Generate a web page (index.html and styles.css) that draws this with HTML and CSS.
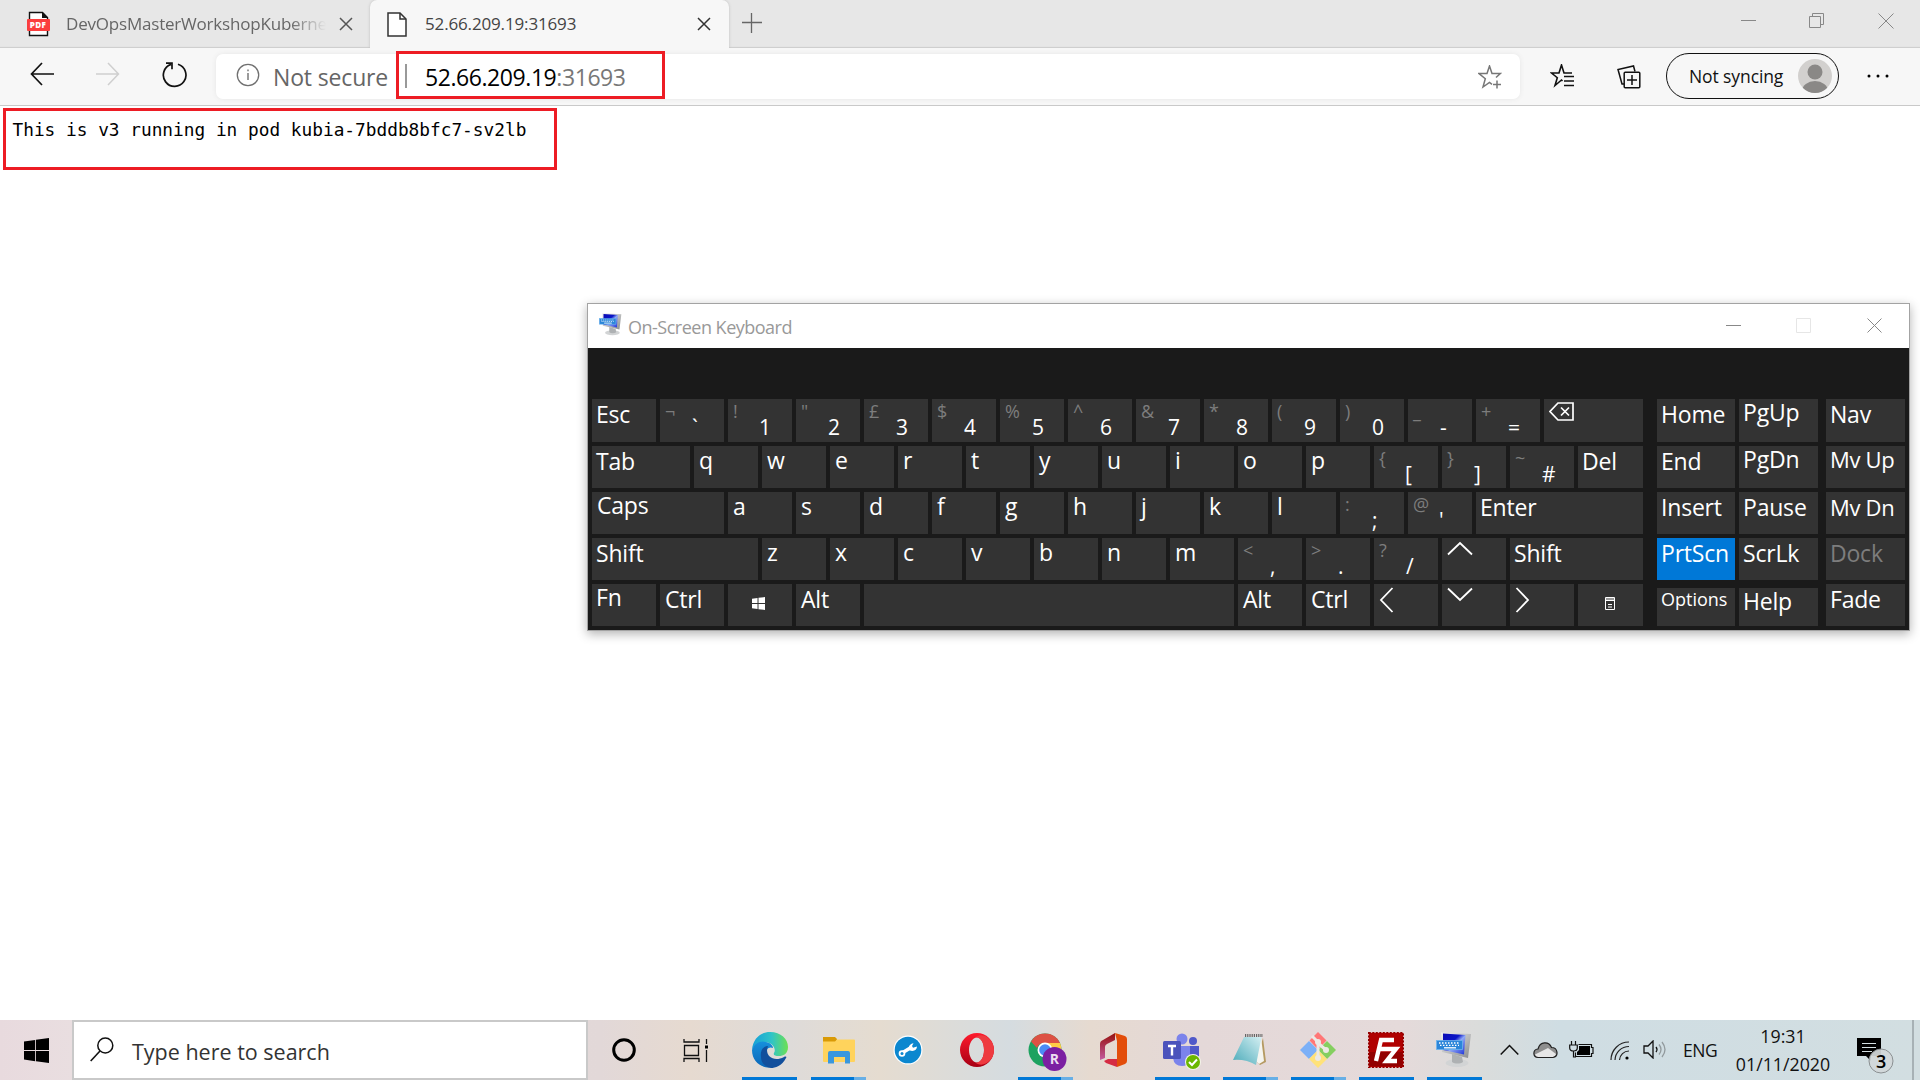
FILE: index.html
```html
<!DOCTYPE html>
<html lang="en">
<head>
<meta charset="utf-8">
<title>52.66.209.19:31693</title>
<link rel="stylesheet" href="styles.css">
</head>
<body>
<svg width="0" height="0" class="defs" aria-hidden="true">
  <defs>
    <linearGradient id="screen" x1="0" y1="0" x2="1" y2="1"><stop offset="0" stop-color="#0a0ab4"/><stop offset=".4" stop-color="#0b16c8"/><stop offset=".55" stop-color="#8fa8f5"/><stop offset="1" stop-color="#1c30d8"/></linearGradient>
    <linearGradient id="frame" x1="0" y1="0" x2="1" y2="1"><stop offset="0" stop-color="#f2f2f0"/><stop offset="1" stop-color="#8a8c8e"/></linearGradient>
    <symbol id="osk" viewBox="0 0 36 36">
      <ellipse cx="21" cy="31" rx="11.500" ry="4" fill="#d2d4d5"/>
      <path d="M16 22l10 3 1 5c-3 2-8 2-11 0z" fill="#aeb1b3"/>
      <path d="M5 .5L35 2 32 26 6 20z" fill="url(#frame)"/>
      <path d="M7 1.500L29.500 3 28 22.500 7 18z" fill="url(#screen)"/>
      <rect x=".5" y="8.500" width="26" height="9" fill="#2b86d9" stroke="#6db4ee" stroke-width=".8"/>
      <path d="M3 11h21M4 13.300h19" stroke="#fff" stroke-width="1.300" stroke-dasharray="1.500 1.500"/>
      <path d="M8 15.800h12" stroke="#fff" stroke-width="1.300"/>
    </symbol>
  </defs>
</svg>
<div class="desktop">
  <header class="tabstrip">
    <div class="tab">
      <svg class="pdf" width="24" height="26" viewBox="0 0 24 26"><path d="M2.500 1.500h13l5 5v18h-18z" fill="#fff" stroke="#111" stroke-width="1.400"/><path d="M15 1v6h6z" fill="#111"/><rect x="0" y="8" width="23" height="12" rx="1" fill="#fb3e3e"/><text x="2.700" y="16.700" class="pdf-label">PDF</text></svg>
      <span class="tab-title faded">DevOpsMasterWorkshopKuberne</span>
      <svg class="tab-x" width="14" height="14" viewBox="0 0 14 14"><path d="M1 1l12 12M13 1L1 13" stroke="#555" stroke-width="1.500"/></svg>
    </div>
    <div class="tab active">
      <svg class="doc" width="20" height="25" viewBox="0 0 20 25"><path d="M1 1h12l6 6v17H1z" fill="#fff" stroke="#333" stroke-width="1.500"/><path d="M13 1v6h6" fill="none" stroke="#333" stroke-width="1.500"/></svg>
      <span class="tab-title">52.66.209.19:31693</span>
      <svg class="tab-x" width="14" height="14" viewBox="0 0 14 14"><path d="M1 1l12 12M13 1L1 13" stroke="#333" stroke-width="1.500"/></svg>
    </div>
    <svg class="plus" width="20" height="20" viewBox="0 0 20 20"><path d="M0 9.500h20M9.500 0v20" stroke="#666" stroke-width="1.300"/></svg>
    <div class="caption">
      <svg width="16" height="16" viewBox="0 0 16 16"><path d="M1 7.500h15" stroke="#888"/></svg>
      <svg width="16" height="16" viewBox="0 0 16 16"><path d="M.5 3.500h11v11H.5zM3.500 3.500v-3h11v11h-3" fill="none" stroke="#888"/></svg>
      <svg width="16" height="16" viewBox="0 0 16 16"><path d="M.5.5l15 15M15.500.5l-15 15" stroke="#888"/></svg>
    </div>
  </header>
  <div class="toolbar">
    <svg class="nav-icon" width="26" height="24" viewBox="0 0 26 24"><path d="M24 12H1.500M12 1L1.500 12 12 23" fill="none" stroke="#111" stroke-width="1.700"/></svg>
    <svg class="nav-icon fwd" width="26" height="24" viewBox="0 0 26 24"><path d="M0 12h22.500M12 1l10.500 11L12 23" fill="none" stroke="#cfcfcf" stroke-width="1.500"/></svg>
    <svg class="nav-icon reload" width="26" height="26" viewBox="0 0 26 26"><path d="M16 2.300A11.300 11.300 0 1 1 9 2.400M4 1.200h6v6" fill="none" stroke="#111" stroke-width="1.700"/></svg>
    <div class="address">
      <svg class="info" width="24" height="24" viewBox="0 0 24 24"><circle cx="12" cy="12" r="10.700" fill="none" stroke="#707070" stroke-width="1.300"/><path d="M12 10v7M12 6.500v1.700" stroke="#707070" stroke-width="1.400"/></svg>
      <span class="secure">Not secure</span>
      <span class="bar"></span>
      <span class="url">52.66.209.19<span class="port">:31693</span></span>
      <svg class="fav" width="24" height="25" viewBox="0 0 24 25"><path d="M18 12.500l4.300-4H14L11.500 1 9 8.500H1l6.300 5.200L5 22l6.500-4.500 2.500 1.800" fill="none" stroke="#777" stroke-width="1.500"/><path d="M15 19.500h8M19 15.500v8" stroke="#777" stroke-width="1.500"/></svg>
    </div>
    <svg class="favs" width="25" height="24" viewBox="0 0 25 24"><path d="M12.500 17L11.500 16 5 21.500 7.300 13.700 1.500 9H9L11.500 1 14 9h8" fill="none" stroke="#111" stroke-width="1.600"/><path d="M14 12.500h10M14 17h10M14 21.500h10" stroke="#111" stroke-width="1.600"/></svg>
    <svg class="coll" width="24" height="24" viewBox="0 0 24 24"><path d="M18 6.500L16.500 1 1 4.500 5 19h2" fill="none" stroke="#111" stroke-width="1.500"/><rect x="7.200" y="7.200" width="15.600" height="15.600" rx="1" fill="none" stroke="#111" stroke-width="1.500"/><path d="M15 10v10M10 15h10" stroke="#111" stroke-width="1.500"/></svg>
    <div class="profile"><span>Not syncing</span>
      <svg width="34" height="34" viewBox="0 0 34 34"><clipPath id="disc"><circle cx="17" cy="17" r="17"/></clipPath><g clip-path="url(#disc)"><rect width="34" height="34" fill="#d2d0ce"/><circle cx="17" cy="13" r="7.500" fill="#8a8886"/><ellipse cx="17" cy="32" rx="13" ry="10" fill="#8a8886"/></g></svg>
    </div>
    <svg class="more" width="22" height="4" viewBox="0 0 22 4"><circle cx="2" cy="2" r="1.500"/><circle cx="11" cy="2" r="1.500"/><circle cx="20" cy="2" r="1.500"/></svg>
  </div>
  <main class="page">
    <pre>This is v3 running in pod kubia-7bddb8bfc7-sv2lb</pre>
  </main>
  <footer class="taskbar">
    <div class="start"><svg width="25" height="25" viewBox="0 0 24 24"><path d="M0 3.300l10.700-1.500v9.800H0zM11.500 1.600L24 0v11.600H11.500zM0 12.400h10.700v9.800L0 20.700zM11.500 12.400H24V24l-12.500-1.700z"/></svg></div>
    <div class="search">
      <svg width="24" height="25" viewBox="0 0 24 25"><circle cx="15.300" cy="8.500" r="7.500" fill="none" stroke="#111" stroke-width="1.500"/><path d="M10 14L.7 24" stroke="#111" stroke-width="1.600"/></svg>
      <span>Type here to search</span>
    </div>
    <div class="shell"><svg width="26" height="26" viewBox="0 0 26 26"><circle cx="13" cy="13" r="10.300" fill="none" stroke="#000" stroke-width="3"/></svg></div>
    <div class="shell view"><svg width="26" height="25" viewBox="0 0 26 25"><path d="M1 1v3h15V1M1 24v-3.500h15V24M1.500 7.500h14v10h-14zM23.500 1v5M23.500 12v12" fill="none" stroke="#111" stroke-width="1.300"/><rect x="22" y="7.500" width="3" height="3"/></svg></div>
    <div class="apps">
      <div class="app on"><svg width="36" height="36" viewBox="0 0 36 36"><defs><linearGradient id="e1" x1="0" x2="1"><stop offset="0" stop-color="#169fd9"/><stop offset=".55" stop-color="#2fc4c7"/><stop offset="1" stop-color="#6de052"/></linearGradient><linearGradient id="e2" x1="0" y1="0" x2="0" y2="1"><stop offset="0" stop-color="#1690dc"/><stop offset="1" stop-color="#0a66b8"/></linearGradient></defs><path d="M0 18C1 6 9 0 18 0c11 0 18 7 18 15 0 7-5 9-9 9-4 0-6-1-5-3 3-5-3-12-11-11C6 10.500 2 14 0 18z" fill="url(#e1)"/><path d="M0 18C2 11 9 8 14 10c5 1 7 4 7 6-6-3-10 6-5 12 2 3 6 5 10 5-9 6-26 1-26-15z" fill="url(#e2)"/><path d="M9 25c-1-6 2-11 7-11-4 9 5 17 16 11 2-1 3 0 2 1-4 8-11 10-15 10C13 35 9 31 9 25z" fill="#124f9c"/></svg></div>
      <div class="app on multi"><svg width="36" height="36" viewBox="0 0 36 36"><path d="M2 5h12l2 2-1 4H2z" fill="#d99a06"/><path d="M2 9.500h12l2-2h17q1 0 1 1V29q0 1-1 1H3q-1 0-1-1z" fill="#ffd35c"/><path d="M7 31V21q0-2 2-2h18q2 0 2 2v10.500h-5V25H13v6.500H7z" fill="#3a97dd"/></svg></div>
      <div class="app"><svg width="36" height="36" viewBox="0 0 36 36"><circle cx="18" cy="18" r="14.500" fill="#fff"/><circle cx="18" cy="18" r="13.300" fill="#0b87cf"/><path d="M12 21l9-5.500" stroke="#fff" stroke-width="3.400"/><circle cx="12" cy="21.500" r="3.300" fill="#fff"/><circle cx="12" cy="21.500" r="1.500" fill="#0b87cf"/><path d="M27 14.500c0 4-4 5.500-8 3.500-1-3 1-6.500 4.500-6.700l-1.500 2.700 1 1.700z" fill="#fff"/></svg></div>
      <div class="app"><svg width="36" height="36" viewBox="0 0 36 36"><defs><linearGradient id="op" x1="0" y1="0" x2="0" y2="1"><stop offset="0" stop-color="#ff1b2d"/><stop offset="1" stop-color="#a70014"/></linearGradient></defs><path fill-rule="evenodd" d="M18 1a17 17 0 1 0 0 34 17 17 0 1 0 0-34zM18 5.500c4.500 0 7 6 7 12.500s-2.500 12.500-7 12.500S10 24.500 10 18 13.500 5.500 18 5.500z" fill="url(#op)"/><path d="M17 5C24 0 35 7 35 18S24 36 17 31c5-1 8-6 8-13S22 6 17 5z" fill="#ee3b40"/></svg></div>
      <div class="app chrome on multi"><svg width="42" height="40" viewBox="0 0 42 40"><circle cx="18" cy="18" r="16.500" fill="#1da260"/><path d="M18 1.500A16.500 16.500 0 0 1 33 11H18a8 8 0 0 0-8 5L4 9.500A16.500 16.500 0 0 1 18 1.500z" fill="#dd5144"/><path d="M18 11h15a16.500 16.500 0 0 1-15 23.500l7-12.500z" fill="#ffcd46"/><circle cx="18" cy="18" r="7.500" fill="#fff"/><circle cx="18" cy="18" r="5.800" fill="#4c8bf5"/><circle cx="27.500" cy="27" r="12" fill="#7b1fa2"/><text x="22.800" y="32.200" class="badge-r">R</text></svg></div>
      <div class="app n"><svg width="36" height="36" viewBox="0 0 36 36"><defs><linearGradient id="of" x1="0" y1="0" x2="0" y2="1"><stop offset="0" stop-color="#97100c"/><stop offset="1" stop-color="#c35aa0"/></linearGradient></defs><path d="M4 12q0-3 3-4L19 1v7l-8 4q-2 1-2 3v11l-5 2z" fill="url(#of)"/><path d="M8 29l4-2h9v8L10 31z" fill="#d52c43"/><path d="M19 1l10 3q2 1 2 3v22q0 2-2 3l-8 3V9z" fill="#e34d0a"/></svg></div>
      <div class="app n on"><svg width="40" height="38" viewBox="0 0 40 38"><circle cx="20" cy="7" r="5.500" fill="#7b83eb"/><circle cx="31" cy="9" r="4" fill="#5059c9"/><path d="M24 14h13v11q-1 7-8 8l-5-5z" fill="#5059c9"/><path d="M11 14h17v14q-2 6-8 6-8 0-9-8z" fill="#7b83eb"/><rect x="1" y="9" width="18" height="18" rx="1.500" fill="#4b53bc"/><path d="M6 14h8M10 14v9.500" stroke="#fff" stroke-width="2.400"/><circle cx="31" cy="30" r="8" fill="#f3f3e8"/><circle cx="31" cy="30" r="7" fill="#6bb700"/><path d="M27 30l3 3 5-5.500" fill="none" stroke="#fff" stroke-width="2"/></svg></div>
      <div class="app n on multi"><svg width="36" height="36" viewBox="0 0 36 36"><defs><linearGradient id="np" x1="0" y1="1" x2="1" y2="0"><stop offset="0" stop-color="#48a9b8"/><stop offset="1" stop-color="#d4eff2"/></linearGradient></defs><path d="M31 6l3 24-6 3-4-4z" fill="#b59a62"/><path d="M29 5l3 24-5 3-3-3z" fill="#f5f5f0"/><path d="M12 5h17.500L24 33Q14 27 1 28z" fill="url(#np)"/><path d="M13 3.500h18" stroke="#666" stroke-width="3" stroke-dasharray="1.200 1"/></svg></div>
      <div class="app n on multi"><svg width="36" height="36" viewBox="0 0 36 36"><path d="M18 0l8.500 8.500-8.500 9-8.500-9z" fill="#f77" /><path d="M9 9l9 9-9 9-9-9z" fill="#7cb0f7"/><path d="M27 9l9 9-9 9-9-9z" fill="#85cf60"/><path d="M18 18l9 9-9 9-9-9z" fill="#ffe27a"/><path d="M12 4l6 6v16M18 11l8 7" stroke="#ece9e5" stroke-width="3" fill="none"/><circle cx="18" cy="10" r="3" fill="#ece9e5"/><circle cx="18" cy="26" r="3" fill="#ece9e5"/><circle cx="26" cy="18" r="3" fill="#ece9e5"/></svg></div>
      <div class="app n on"><svg width="36" height="36" viewBox="0 0 36 36"><rect x=".8" y=".8" width="34.400" height="34.400" fill="#b00000" stroke="#920000" stroke-width="1.600" stroke-dasharray="2 1.500"/><rect x="1.500" y="20" width="33" height="14" fill="#920000"/><path d="M8 29l5-21h13M10.500 17h9M19 17h9L18.500 29H29" fill="none" stroke="#fff" stroke-width="4.300"/></svg></div>
      <div class="app n on"><svg width="36" height="36"><use href="#osk"/></svg></div>
    </div>
    <div class="tray">
      <svg class="chev" width="19" height="12" viewBox="0 0 19 12"><path d="M.7 10.500L9.500 1.500l8.800 9" fill="none" stroke="#111" stroke-width="1.500"/></svg>
      <svg class="cloud" width="25" height="18" viewBox="0 0 25 18"><path d="M5 16.500C-.5 16-.5 8.500 5 8 7 0 16 0 18.500 6.500c6.500 0 7.500 9 1.500 10z" fill="#8e8e8e"/><path d="M2 13.500L15 7l8 6q-.5 3-3 3.500H5q-2.500-.5-3-3z" fill="#e7e7e7"/><path d="M5 16.500C-.5 16-.5 8.500 5 8 7 0 16 0 18.500 6.500c6.500 0 7.500 9 1.500 10z" fill="none" stroke="#222" stroke-width="1.200"/></svg>
      <svg class="bat" width="25" height="18" viewBox="0 0 25 18"><path d="M2.500 0v4M6.500 0v4M.7 4h7.600v3q0 3-3.800 3T.7 7zM4.500 10v6h2.500" fill="none" stroke="#111" stroke-width="1.200"/><path d="M9.500 3.500h13v3H24v6h-1.500v3H6.500v-4" fill="none" stroke="#111" stroke-width="1.200"/><path d="M10 5h11v9H8v-3l2-2z"/></svg>
      <svg class="wifi" width="20" height="20" viewBox="0 0 20 20"><g fill="none" stroke="#222" stroke-width="1.200"><path d="M1 19A18 18 0 0 1 19 1M5 19A14 14 0 0 1 19 5.500M9.500 19A9.500 9.500 0 0 1 19 10"/></g><circle cx="17" cy="17" r="1.600"/></svg>
      <svg class="vol" width="23" height="19" viewBox="0 0 23 19"><path d="M1 6h4l5-5v17l-5-5H1z" fill="none" stroke="#111" stroke-width="1.300"/><path d="M13 7q2 2.500 0 5" fill="none" stroke="#111" stroke-width="1.300"/><path d="M16 4.500q4 5 0 10M19 2q6 7.500 0 15" fill="none" stroke="#929a9d" stroke-width="1.300"/></svg>
      <span class="lang">ENG</span>
      <div class="clock"><span class="time">19:31</span><span class="date">01/11/2020</span></div>
      <svg class="note" width="38" height="38" viewBox="0 0 38 38"><path d="M0 2h24v18H14v5l-5-5H0z"/><path d="M5 7.500h14M5 11.500h14M5 15.500h10" stroke="#d4dfe2" stroke-width="1.200"/><circle cx="24" cy="25" r="12" fill="#d2d7d9" fill-opacity=".93" stroke="#8b9092"/><text x="19" y="31.500" class="count">3</text></svg>
      <span class="peek"></span>
    </div>
  </footer>

  <div class="mark mark-url"></div>
  <div class="mark mark-body"></div>

  <section class="osk">
    <div class="osk-title">
      <svg width="23" height="23"><use href="#osk"/></svg>
      <span>On-Screen Keyboard</span>
      <div class="osk-caption">
        <svg width="16" height="16" viewBox="0 0 16 16"><path d="M1 7.500h15" stroke="#888"/></svg>
        <svg width="16" height="16" viewBox="0 0 16 16"><path d="M.5.5h14v14H.5z" fill="none" stroke="#e6e6e6"/></svg>
        <svg width="16" height="16" viewBox="0 0 16 16"><path d="M.5.5l14 14M14.500.5l-14 14" stroke="#888"/></svg>
      </div>
    </div>
    <div class="keys">
      <div class="block main">
        <div class="row">
          <div class="key">Esc</div>
          <div class="key two"><i>¬</i><b>`</b></div><div class="key two"><i>!</i><b class="one">1</b></div><div class="key two"><i>"</i><b>2</b></div><div class="key two"><i>£</i><b>3</b></div><div class="key two"><i>$</i><b>4</b></div><div class="key two"><i>%</i><b>5</b></div><div class="key two"><i>^</i><b>6</b></div><div class="key two"><i>&amp;</i><b>7</b></div><div class="key two"><i>*</i><b>8</b></div><div class="key two"><i>(</i><b>9</b></div><div class="key two"><i>)</i><b>0</b></div><div class="key two"><i>_</i><b>-</b></div><div class="key two"><i>+</i><b>=</b></div>
          <div class="key fill"><svg width="25" height="19" viewBox="0 0 25 19"><path d="M9 1h15v17H9L1 9.500zM12 5.500l8 8M20 5.500l-8 8" fill="none" stroke="#fff" stroke-width="1.700"/></svg></div>
        </div>
        <div class="row">
          <div class="key w98">Tab</div>
          <div class="key l">q</div><div class="key l">w</div><div class="key l">e</div><div class="key l">r</div><div class="key l">t</div><div class="key l">y</div><div class="key l">u</div><div class="key l">i</div><div class="key l">o</div><div class="key l">p</div><div class="key two"><i>{</i><b class="one">[</b></div><div class="key two"><i>}</i><b>]</b></div><div class="key two"><i>~</i><b>#</b></div>
          <div class="key fill">Del</div>
        </div>
        <div class="row">
          <div class="key w132 l">Caps</div>
          <div class="key l">a</div><div class="key l">s</div><div class="key l">d</div><div class="key l">f</div><div class="key l">g</div><div class="key l">h</div><div class="key l">j</div><div class="key l">k</div><div class="key l">l</div><div class="key two"><i>:</i><b>;</b></div><div class="key two"><i>@</i><b class="one">'</b></div>
          <div class="key fill">Enter</div>
        </div>
        <div class="row">
          <div class="key w166">Shift</div>
          <div class="key l">z</div><div class="key l">x</div><div class="key l">c</div><div class="key l">v</div><div class="key l">b</div><div class="key l">n</div><div class="key l">m</div><div class="key two"><i>&lt;</i><b>,</b></div><div class="key two"><i>&gt;</i><b>.</b></div><div class="key two"><i>?</i><b>/</b></div>
          <div class="key"><svg width="26" height="15" viewBox="0 0 26 15"><path d="M1 13.500L13 2l12 11.500" fill="none" stroke="#fff" stroke-width="1.800"/></svg></div>
          <div class="key fill">Shift</div>
        </div>
        <div class="row">
          <div class="key c">Fn</div><div class="key in">Ctrl</div>
          <div class="key mid"><svg width="13" height="13" viewBox="0 0 24 24"><path fill="#fff" d="M0 3.300l10.200-1.500v9.200H0zM12 1.500L24 0v11H12zM0 13h10.200v9.200L0 20.700zM12 13h12v11l-12-1.600z"/></svg></div>
          <div class="key in">Alt</div><div class="key fill"></div><div class="key in">Alt</div><div class="key in">Ctrl</div>
          <div class="key"><svg width="15" height="26" viewBox="0 0 15 26"><path d="M13.500 1L2 13l11.500 12" fill="none" stroke="#fff" stroke-width="1.800"/></svg></div>
          <div class="key"><svg width="26" height="15" viewBox="0 0 26 15"><path d="M1 1.500L13 13 25 1.500" fill="none" stroke="#fff" stroke-width="1.800"/></svg></div>
          <div class="key"><svg width="15" height="26" viewBox="0 0 15 26"><path d="M1.500 1L13 13 1.500 25" fill="none" stroke="#fff" stroke-width="1.800"/></svg></div>
          <div class="key w65 mid menu"><svg width="10" height="13" viewBox="0 0 10 13"><path d="M.5.5h9v12h-9zM0 2h10M0 3.500h10M3 7.500h4M3 10h4" fill="none" stroke="#fff"/></svg></div>
        </div>
      </div>
      <div class="block nav">
        <div class="row"><div class="key w78">Home</div><div class="key fill c">PgUp</div></div>
        <div class="row"><div class="key w78">End</div><div class="key fill c">PgDn</div></div>
        <div class="row"><div class="key w78">Insert</div><div class="key fill">Pause</div></div>
        <div class="row"><div class="key w78 hot">PrtScn</div><div class="key fill">ScrLk</div></div>
        <div class="row short"><div class="key w78 small">Options</div><div class="key fill c">Help</div></div>
      </div>
      <div class="block side">
        <div class="row"><div class="key fill">Nav</div></div>
        <div class="row"><div class="key fill mv c">Mv Up</div></div>
        <div class="row"><div class="key fill mv">Mv Dn</div></div>
        <div class="row"><div class="key fill dim">Dock</div></div>
        <div class="row"><div class="key fill">Fade</div></div>
      </div>
    </div>
  </section>
</div>
</body>
</html>
```
FILE: styles.css
```css
* { box-sizing: border-box; }
body { margin: 0; background: #fff; font-family: "Open Sans", "Noto Sans", sans-serif; color: #111; overflow: hidden; }
svg { display: block; flex: none; }
.defs { position: absolute; }
.desktop { position: relative; width: 1920px; height: 1080px; display: flex; flex-direction: column; }

/* Tab strip */
.tabstrip { height: 48px; flex: none; display: flex; background: #e7e7e7; box-shadow: inset 0 -2px 1px -1px #cdcdcd; }
.tab { width: 370px; display: flex; align-items: center; padding: 0 17px 0 27px; }
.tab.active { width: 359px; background: #f7f7f7; border-radius: 7px 7px 0 0; padding: 0 18px 0 17px; box-shadow: 0 0 3px #bdbdbd; clip-path: inset(0 -4px 0 -4px); }
.tab-title { font-size: 17px; letter-spacing: -.15px; color: #444; white-space: nowrap; margin-left: 18px; padding-bottom: 2px; flex: 1; overflow: hidden; }
.tab-title.faded { color: #666; letter-spacing: -.2px; margin-left: 15px; margin-right: 13px; -webkit-mask-image: linear-gradient(90deg, #000 86%, transparent); mask-image: linear-gradient(90deg, #000 86%, transparent); }
.pdf-label { font: 800 8px "Open Sans", sans-serif; fill: #fff; letter-spacing: .4px; }
.badge-r { font: 700 14px "Open Sans", sans-serif; fill: #eadcf0; }
.plus { margin: 13px 0 0 13px; }
.caption { display: flex; gap: 53px; margin: 13px 26px 0 auto; }

/* Toolbar */
.toolbar { height: 58px; flex: none; display: flex; align-items: center; background: #f7f7f7; border-bottom: 1px solid #c9c9c9; padding-left: 30px; }
.nav-icon { margin-bottom: 5px; }
.fwd { margin-left: 40px; }
.reload { margin-left: 40px; margin-bottom: 3px; }
.address { width: 1304px; height: 45px; margin: 0 0 1px 28px; background: #fff; border-radius: 7px; box-shadow: 0 0 5px #e6e6e6; display: flex; align-items: center; padding: 0 18px 0 20px; font-size: 23px; }
.info { margin-bottom: 2px; }
.secure { color: #666; margin-left: 13px; width: 116px; letter-spacing: -.15px; padding-top: 2px; white-space: nowrap; }
.bar { width: 2px; height: 24px; background: #999; margin-left: 16px; }
.url { margin-left: 18px; letter-spacing: -.43px; padding-top: 2px; color: #000; }
.port { color: #777; }
.fav { margin: 2px 0 0 auto; }
.favs { margin: 0 0 1px 30px; }
.coll { margin: 0 0 0 42px; }
.profile { width: 173px; height: 46px; margin: 0 0 2px 25px; border: 1.500px solid #111; border-radius: 23px; display: flex; align-items: center; justify-content: space-between; padding: 0 6px 0 22px; font-size: 17.500px; letter-spacing: -.1px; white-space: nowrap; }
.more { margin: 0 0 1px 28px; }

/* Page */
.page { flex: 1; padding: 12px 12px 12px 12.500px; }
.page pre { margin: 0; font: 17.800px/24px "DejaVu Sans Mono", monospace; color: #000; }
.mark { position: absolute; border: 3px solid #ed1c24; }
.mark-url { left: 396px; top: 51px; width: 269px; height: 48px; }
.mark-body { left: 3px; top: 108px; width: 554px; height: 62px; }

/* Keyboard window */
.osk { position: absolute; left: 587px; top: 303px; width: 1323px; height: 328px; border: 1px solid #a3a3a3; background: #1a1a1a; box-shadow: 0 3px 10px rgba(0,0,0,.3); display: flex; flex-direction: column; }
.osk-title { height: 44px; background: #fff; display: flex; align-items: center; padding: 0 26px 0 11px; color: #999; font-size: 18px; letter-spacing: -.5px; }
.osk-title > svg { margin-bottom: 3px; }
.osk-title > span { margin-left: 6px; padding-top: 1px; }
.osk-caption { display: flex; gap: 55px; margin: 0 0 1px auto; }
.keys { flex: 1; display: flex; padding: 51px 4px 4px; color: #fff; }
.block { display: flex; flex-direction: column; gap: 4px; }
.main { width: 1051px; }
.nav { width: 161px; margin-left: 14px; }
.side { width: 79px; margin-left: 8px; }
.row { display: flex; gap: 4px; height: 42px; }
.row:first-child { height: 43px; }
.short { height: 38px; margin-top: 4px; }
.key { width: 64px; flex: none; background: #333; padding: 3px 0 0 4px; font-size: 23px; line-height: 24px; letter-spacing: -.2px; white-space: nowrap; }
.key.fill { flex: 1 1 0; width: auto; }
.key.c { padding-top: 1px; }
.key.l { padding: 2px 0 0 5px; }
.key.in { padding-left: 5px; }
.w65 { width: 65px; }
.w78 { width: 78px; }
.w98 { width: 98px; }
.key.w132 { width: 132px; padding-top: 1px; }
.w166 { width: 166px; }
.key.mid { display: flex; justify-content: center; padding: 13px 3px 0 0; }
.key.menu { padding-right: 1px; }
.key svg { margin-left: 1px; }
.key.mid svg { margin-left: 0; }
.two { display: flex; padding: 0 0 0 5px; }
.two i { width: 27px; font: 18px/24px "Open Sans", sans-serif; color: #7d7d7d; }
.two b { font: 21px/24px "Open Sans", sans-serif; margin-top: 16px; }
.two .one { margin-left: -1px; }
.hot { background: #0078d7; }
.dim { color: #7d7d7d; }
.small { font-size: 18px; line-height: 22px; padding-top: 0; letter-spacing: 0; }
.mv { font-size: 22px; letter-spacing: -.3px; }

/* Taskbar */
.taskbar { height: 60px; flex: none; display: flex; background: linear-gradient(90deg, #e8dade 0, #e9dee0 72px, #e2d8d8 600px, #e6dad0 690px, #dedbd9 790px, #e5dcd0 880px, #d5dce0 1010px, #e6dad0 1090px, #e4d8d8 1200px, #e5dada 1400px, #dadcdb 1480px, #cfdde3 1560px, #d2dee1 1920px); }
.start { width: 72px; padding: 18px 0 0 24px; }
.search { width: 516px; background: #fff; border: 2px solid #c9c9c9; display: flex; align-items: center; padding-left: 16px; font-size: 21.500px; color: #333; }
.search svg { margin-bottom: 1px; }
.search span { margin-left: 18px; padding-top: 2px; }
.shell { width: 73px; padding: 17px 0 0 23px; }
.shell.view { width: 74px; padding: 18px 0 0 22px; }
.apps { display: flex; }
.app { width: 69px; display: flex; justify-content: center; padding-top: 12px; }
.app.chrome { padding-left: 4px; }
.app.n { width: 68px; }
.app.on { background: linear-gradient(#0078d7, #0078d7) center bottom / 55px 3px no-repeat; }
.app.multi { background: linear-gradient(90deg, #0078d7 43px, #67afe6 43px) center bottom / 55px 3px no-repeat; }
.tray { flex: 1; display: flex; padding-left: 12px; }
.chev { margin-top: 24px; }
.cloud { margin: 21px 0 0 14px; }
.bat { margin: 21px 0 0 11px; }
.wifi { margin: 21px 0 0 16px; }
.vol { margin: 20px 0 0 13px; }
.lang { margin: 18px 0 0 17px; font-size: 17.500px; line-height: 24px; width: 34px; letter-spacing: -.4px; }
.clock { width: 96px; margin-left: 18px; display: flex; flex-direction: column; align-items: center; font-size: 17.800px; line-height: 28px; padding-top: 2px; letter-spacing: 0; white-space: nowrap; }
.note { margin: 16px 0 0 26px; }
.count { font: 600 18px "Open Sans", sans-serif; }
.peek { width: 2px; background: #a7b1b5; margin: 0 6px 0 auto; }
```
